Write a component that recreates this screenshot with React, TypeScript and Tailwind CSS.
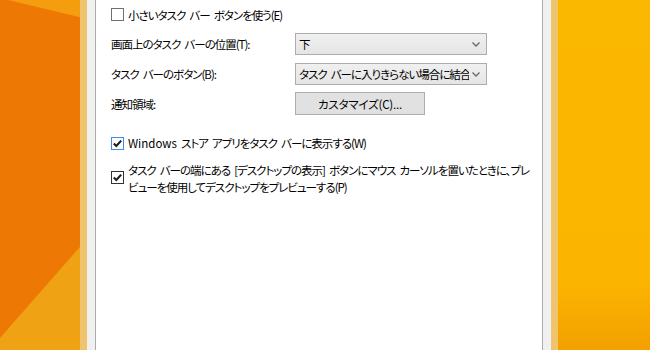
import type { ReactNode } from 'react';

const font = "font-['Noto_Sans_CJK_JP','Noto_Sans',sans-serif] [font-feature-settings:'palt']";

function Wallpaper() {
  return (
    <svg className="absolute inset-0" width="650" height="350" viewBox="0 0 650 350">
      <defs>
        <linearGradient id="right" x1="0" y1="0" x2="0" y2="1">
          <stop offset="0" stopColor="#fbb800" />
          <stop offset="0.8" stopColor="#fbb500" />
          <stop offset="1" stopColor="#f3a000" />
        </linearGradient>
      </defs>
      <rect x="0" y="0" width="100" height="350" fill="#ee7804" />
      <polygon points="8,0 100,0 100,22" fill="#f49d0e" />
      <polygon points="0,338 100,224 100,350 0,350" fill="#f0a215" />
      <rect x="540" y="0" width="110" height="350" fill="url(#right)" />
    </svg>
  );
}

function CheckBox({ checked, focused }: { checked?: boolean; focused?: boolean }) {
  return (
    <span
      className={`flex h-[13px] w-[13px] shrink-0 items-center justify-center border bg-white ${
        focused ? 'border-[#3c8ee0]' : checked ? 'border-[#333333]' : 'border-[#707070]'
      }`}
    >
      {checked && (
        <svg width="11" height="11" viewBox="0 0 11 11">
          <path d="M1.8 5.6 L4.3 8 L9.2 2.6" fill="none" stroke="#1e1e1e" strokeWidth="2.1" />
        </svg>
      )}
    </span>
  );
}

function Chevron() {
  return (
    <svg width="8" height="5" viewBox="0 0 8 5" className="shrink-0">
      <path d="M0.5 0.5 L4 4 L7.5 0.5" fill="none" stroke="#6b6b6b" strokeWidth="1.4" />
    </svg>
  );
}

function Combo({ value }: { value: string }) {
  return (
    <div className="flex h-[22px] w-[192px] items-center border border-[#acacac] bg-gradient-to-b from-[#f0f0f0] to-[#e5e5e5] pr-[6px] pl-[3px]">
      <span className="w-[170px] overflow-hidden whitespace-nowrap text-black">{value}</span>
      <span className="ml-auto">
        <Chevron />
      </span>
    </div>
  );
}

function Row({ label, children }: { label: string; children: ReactNode }) {
  return (
    <div className="flex items-center">
      <span className="w-[184px]">{label}</span>
      {children}
    </div>
  );
}

export default function App() {
  return (
    <div
      className={`relative h-[350px] w-[650px] overflow-hidden text-[11.5px] leading-[16px] tracking-[-1px] [word-spacing:2.5px] text-black ${font}`}
    >
      <Wallpaper />
      <div className="relative flex h-full pl-[80px]">
        {/* window frame */}
        <div className="flex h-full w-[478px] shrink-0 border-x-[7px] border-[#efc46e] bg-[#f0f0f0] px-[8px]">
          <div className="h-full min-w-0 flex-1 overflow-hidden border-x border-[#acacac] bg-white pl-[15px]">
            <div className="flex h-[30px] items-center gap-[4px] pb-[1px]">
              <CheckBox />
              <span>小さいタスク&nbsp;バー&nbsp;ボタンを使う(E)</span>
            </div>

            <div className="mt-[3px]">
              <Row label="画面上のタスク バーの位置(T):">
                <Combo value="下" />
              </Row>
            </div>
            <div className="mt-[8px]">
              <Row label="タスク バーのボタン(B):">
                <Combo value="タスク バーに入りきらない場合に結合" />
              </Row>
            </div>
            <div className="mt-[7px]">
              <Row label="通知領域:">
                <button
                  type="button"
                  className="flex h-[23px] w-[130px] items-center justify-center border border-[#adadad] bg-[#e1e1e1] tracking-[-0.2px]"
                >
                  カスタマイズ(C)...
                </button>
              </Row>
            </div>

            <div className="mt-[20px] flex h-[16px] items-center gap-[4px]">
              <CheckBox checked focused />
              <span>
                <span className="tracking-normal">Windows</span> ストア アプリをタスク バーに表示する(W)
              </span>
            </div>

            <div className="mt-[11px] flex items-start gap-[4px]">
              <span className="mt-[9px]">
                <CheckBox checked />
              </span>
              <p className="whitespace-nowrap leading-[17px]">
                タスク バーの端にある [デスクトップの表示] ボタンにマウス カーソルを置いたときに、プレ
                <br />
                ビューを使用してデスクトップをプレビューする(P)
              </p>
            </div>
          </div>
        </div>
      </div>
    </div>
  );
}
